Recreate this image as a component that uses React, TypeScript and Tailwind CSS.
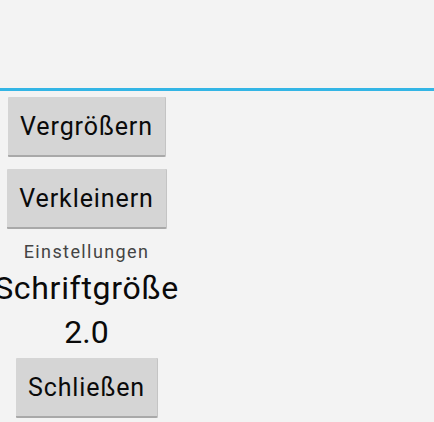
import React from 'react';

function HoloButton({label}: {label: string}) {
	return (
		<button className="h-[60px] px-[12px] bg-[#d5d5d5] border-b-2 border-b-[#a9a9a9] shadow-[1px_0_0_#c4c4c4] rounded-[1px] text-[25px] tracking-[0.9px] text-[#0a0a0a] leading-none whitespace-nowrap">
			{label}
		</button>
	);
}

export default function App() {
	return (
		<div
			className="w-[434px] h-[422px] overflow-hidden bg-[#f3f3f3]"
			style={{fontFamily: 'Roboto, "Noto Sans", sans-serif'}}
		>
			{/* Title area */}
			<div className="h-[88px]" />
			<div className="h-[3px] bg-[#33b5e5]" />

			{/* Content */}
			<div className="w-[173px] flex flex-col items-center">
				<div className="mt-[6px]">
					<HoloButton label="Vergrößern" />
				</div>
				<div className="mt-[12px]">
					<HoloButton label="Verkleinern" />
				</div>
				<p className="mt-[11px] text-[18px] leading-[24px] tracking-[1.4px] text-[#444] whitespace-nowrap">
					Einstellungen
				</p>
				<p className="mt-[5px] text-[32px] leading-[38px] tracking-[0.7px] text-[#0a0a0a] whitespace-nowrap">
					Schriftgröße
				</p>
				<p className="mt-[4px] text-[32px] leading-[42px] text-[#0a0a0a]">2.0</p>
				<div className="mt-[5px]">
					<HoloButton label="Schließen" />
				</div>
			</div>
		</div>
	);
}
